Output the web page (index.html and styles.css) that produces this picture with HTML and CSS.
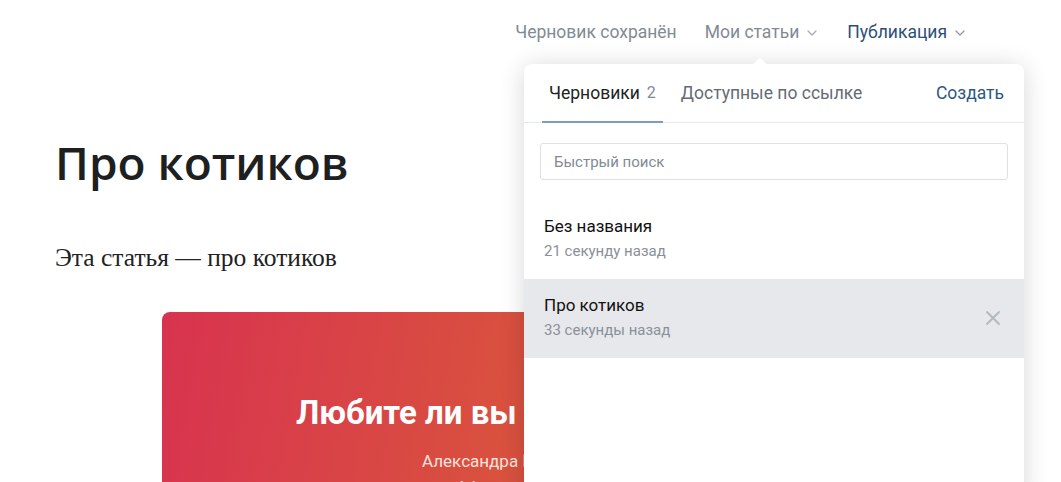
FILE: index.html
```html
<!DOCTYPE html>
<html lang="ru">
  <head>
    <meta charset="UTF-8" />
    <meta name="viewport" content="width=device-width, initial-scale=1.0" />
    <title>Про котиков</title>
    <link rel="stylesheet" href="styles.css">
  </head>
  <body>
    <header class="topbar">
      <span class="status">Черновик сохранён</span>
      <span class="menu-link is-open">Мои статьи
        <svg class="chevron" width="10" height="6" viewBox="0 0 10 6"><path d="M1 1l4 4 4-4" fill="none" stroke="currentColor" stroke-width="1.3" stroke-linecap="round" stroke-linejoin="round"/></svg>
      </span>
      <span class="menu-link is-publish">Публикация
        <svg class="chevron" width="10" height="6" viewBox="0 0 10 6"><path d="M1 1l4 4 4-4" fill="none" stroke="currentColor" stroke-width="1.3" stroke-linecap="round" stroke-linejoin="round"/></svg>
      </span>
    </header>

    <main class="article">
      <h1 class="article-title">Про котиков</h1>
      <p class="article-lead">Эта статья — про котиков</p>
      <div class="cover">
        <h2 class="cover-title">Любите ли вы котиков?</h2>
        <div class="cover-author">Александра Котова</div>
        <div class="cover-date">4 февраля</div>
      </div>
    </main>

    <div class="drafts">
      <div class="drafts-tabs">
        <span class="tab is-active">Черновики <span class="tab-count">2</span></span>
        <span class="tab">Доступные по ссылке</span>
        <span class="tab-action">Создать</span>
      </div>
      <div class="drafts-search">
        <input class="search-input" type="text" placeholder="Быстрый поиск">
      </div>
      <ul class="drafts-list">
        <li class="draft">
          <div class="draft-title">Без названия</div>
          <div class="draft-time">21 секунду назад</div>
        </li>
        <li class="draft is-hover">
          <div class="draft-title">Про котиков</div>
          <div class="draft-time">33 секунды назад</div>
          <svg class="draft-remove" width="16" height="16" viewBox="0 0 16 16"><path d="M2 2l12 12M14 2L2 14" stroke="currentColor" stroke-width="1.8" stroke-linecap="round"/></svg>
        </li>
      </ul>
    </div>
  </body>
</html>
```

FILE: styles.css
```css
* {
  box-sizing: border-box;
  margin: 0;
  padding: 0;
}
body {
  background: #fff;
  font-family: Roboto, "Liberation Sans", sans-serif;
  overflow: hidden;
  height: 482px;
}
.topbar {
  display: flex;
  justify-content: flex-end;
  align-items: center;
  height: 64px;
  padding-right: 96px;
  font-size: 17.5px;
  gap: 28px;
}
.status {
  color: #828a94;
}
.menu-link {
  display: flex;
  align-items: center;
  gap: 8px;
  color: #828a94;
}
.menu-link .chevron {
  color: #a3abb5;
  margin-top: 1px;
}
.is-publish {
  color: #2c4f75;
  margin-left: 2px;
}
.is-publish .chevron {
  color: #8f9cab;
}

.article {
  padding: 70px 0 0 55px;
}
.article-title {
  font-family: "Open Sans", sans-serif;
  font-weight: 600;
  font-size: 46px;
  line-height: 56px;
  color: #1d1f21;
}
.article-lead {
  margin-top: 53px;
  font-family: "Liberation Serif", serif;
  font-size: 25.5px;
  line-height: 30px;
  color: #222;
}
.cover {
  margin: 39px 0 0 107px;
  width: 738px;
  height: 260px;
  border-radius: 8px;
  background: linear-gradient(100deg, #d8334f 0%, #d9503f 45%, #d9633a 100%);
  color: #fff;
  padding: 79px 0 0 134px;
}
.cover-title {
  font-family: Roboto, sans-serif;
  font-weight: 700;
  font-size: 33px;
  line-height: 44px;
  white-space: nowrap;
}
.cover-author {
  margin-top: 15px;
  padding-left: 126px;
  font-size: 17px;
  line-height: 22px;
  color: #fbe3dc;
}
.cover-date {
  margin-top: 5px;
  padding-left: 160px;
  font-size: 15px;
  line-height: 20px;
  color: #fbe3dc;
}

.drafts {
  position: absolute;
  left: 524px;
  top: 64px;
  width: 500px;
  height: 440px;
  background: #fff;
  border-radius: 8px;
  box-shadow: 0 2px 24px rgba(0, 0, 0, 0.16);
}
.drafts::before {
  content: "";
  position: absolute;
  top: -6px;
  left: 229px;
  border-left: 7px solid transparent;
  border-right: 7px solid transparent;
  border-bottom: 6px solid #fff;
}
.drafts-tabs {
  display: flex;
  align-items: stretch;
  height: 59px;
  padding: 0 20px 0 18px;
  border-bottom: 1px solid #e7e8ec;
  font-size: 17.5px;
}
.tab {
  display: flex;
  align-items: center;
  padding: 0 7px;
  margin-right: 11px;
  color: #656b73;
  border-bottom: 2px solid transparent;
  margin-bottom: -1px;
}
.tab.is-active {
  color: #222;
  border-bottom-color: #7d9bbd;
}
.tab-count {
  color: #828a94;
  margin-left: 7px;
  font-size: 16px;
}
.tab-action {
  margin-left: auto;
  display: flex;
  align-items: center;
  color: #2c5782;
}
.drafts-search {
  padding: 20px 16px 0 16px;
}
.search-input {
  width: 100%;
  height: 37px;
  border: 1px solid #dce1e6;
  border-radius: 3px;
  padding: 0 13px;
  font-family: Roboto, sans-serif;
  font-size: 15px;
  color: #222;
  outline: none;
}
.search-input::placeholder {
  color: #828a94;
}
.drafts-list {
  list-style: none;
  margin-top: 20px;
}
.draft {
  position: relative;
  height: 79px;
  padding: 15px 20px 0 20px;
}
.draft.is-hover {
  background: #e6e8ec;
}
.draft-title {
  font-size: 17px;
  line-height: 22px;
  color: #111;
}
.draft-time {
  margin-top: 5px;
  font-size: 15px;
  line-height: 18px;
  color: #8a9099;
}
.draft-remove {
  position: absolute;
  right: 23px;
  top: 31px;
  color: #b2b8c0;
}
```
